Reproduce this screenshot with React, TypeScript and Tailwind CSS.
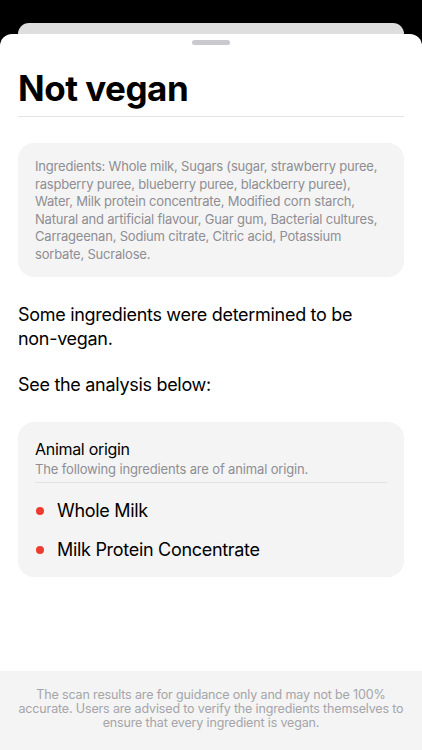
import React from "react";

const ingredients =
  "Ingredients: Whole milk, Sugars (sugar, strawberry puree, raspberry puree, blueberry puree, blackberry puree), Water, Milk protein concentrate, Modified corn starch, Natural and artificial flavour, Guar gum, Bacterial cultures, Carrageenan, Sodium citrate, Citric acid, Potassium sorbate, Sucralose.";

const animalItems = ["Whole Milk", "Milk Protein Concentrate"];

export default function App() {
  return (
    <div
      className="w-[422px] h-[750px] bg-black overflow-hidden flex flex-col"
      style={{ fontFamily: "Inter, 'Noto Sans', sans-serif" }}
    >
      {/* stacked sheet behind */}
      <div className="mt-[23px] mx-[18px] h-[11px] bg-[#dedede] rounded-t-[12px] shrink-0" />

      {/* main sheet */}
      <div className="flex-1 bg-white rounded-t-[12px] flex flex-col">
        <div className="flex justify-center pt-[6px]">
          <div className="w-[38px] h-[5px] rounded-full bg-[#c9c9ce]" />
        </div>

        <div className="px-[18px] flex-1 flex flex-col">
          <h1 className="mt-[22px] text-[35px] leading-[42px] font-bold text-black tracking-[-0.5px]">
            Not vegan
          </h1>
          <div className="mt-[7px] h-px bg-[#e5e5e5]" />

          <div className="mt-[26px] bg-[#f4f4f4] rounded-[16px] px-[17px] pt-[15px] pb-[14px]">
            <p className="text-[13px] leading-[17.5px] tracking-[-0.2px] text-[#8e8e93]">{ingredients}</p>
          </div>

          <p className="mt-[26px] text-[18px] leading-[24px] tracking-[-0.3px] text-black">
            Some ingredients were determined to be <span className="whitespace-nowrap">non-vegan.</span>
          </p>
          <p className="mt-[22px] text-[18px] leading-[24px] tracking-[-0.3px] text-black">
            See the analysis below:
          </p>

          <div className="mt-[25px] bg-[#f4f4f4] rounded-[16px] px-[17px] pt-[16px] pb-[8px]">
            <div className="text-[16px] leading-[22px] tracking-[-0.3px] text-black">Animal origin</div>
            <div className="text-[13px] leading-[18px] tracking-[-0.15px] text-[#8e8e93]">
              The following ingredients are of animal origin.
            </div>
            <div className="mt-[4px] h-px bg-[#e2e2e2]" />
            <ul className="mt-[8px] flex flex-col">
              {animalItems.map((item) => (
                <li key={item} className="flex items-center h-[39px]">
                  <span className="w-[8px] h-[8px] rounded-full bg-[#ee3b2f] ml-[1px]" />
                  <span className="ml-[13px] text-[18px] tracking-[-0.3px] text-black">{item}</span>
                </li>
              ))}
            </ul>
          </div>
        </div>

        <div className="h-[79px] bg-[#f4f4f4] flex items-start justify-center pt-[17px] px-[14px]">
          <p className="text-[12.5px] leading-[14px] tracking-[-0.15px] text-[#a5a5aa] text-center">
            The scan results are for guidance only and may not be 100% accurate. Users are advised to verify the
            ingredients themselves to ensure that every ingredient is vegan.
          </p>
        </div>
      </div>
    </div>
  );
}
